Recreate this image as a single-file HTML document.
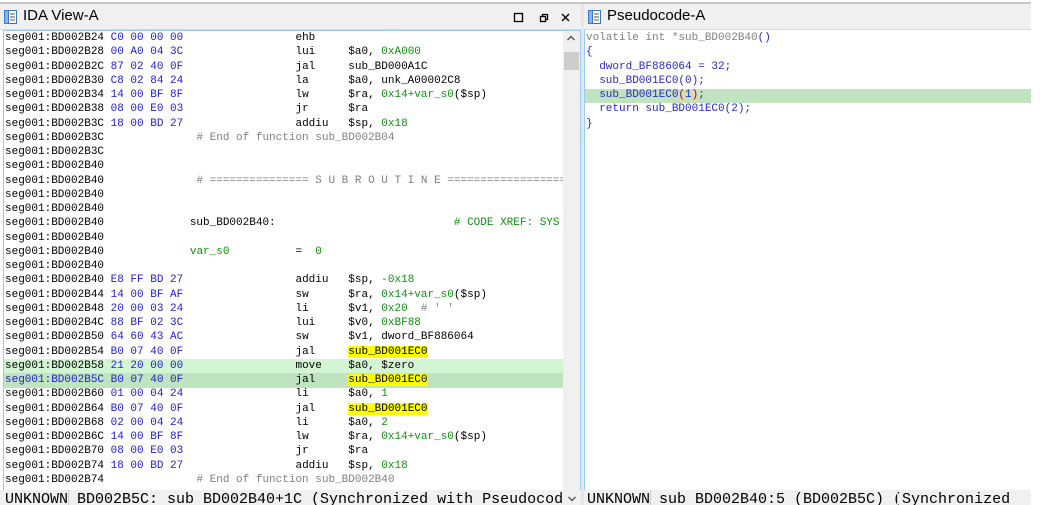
<!DOCTYPE html>
<html><head><style>
*{margin:0;padding:0;box-sizing:border-box}
body{width:1063px;height:505px;background:#fff;position:relative;overflow:hidden;font-family:"Liberation Mono",monospace}
.abs{position:absolute}
.title{font-family:"Liberation Sans",sans-serif;font-size:15px;color:#000}
.code{position:absolute;font-size:11px;line-height:14.26px;color:#000;overflow:hidden}
.row{height:14.26px;white-space:pre}
.h{color:#2020d0}
.g{color:#109010}
.c{color:#808080}
.y{background:#ffff00}
.p{color:#2828c8}
.status{font-size:15px;white-space:pre;color:#000;line-height:15px}
</style></head><body>
<div class="abs" style="left:0;top:2px;width:1031px;height:2px;background:#c8c8c8"></div>
<div class="abs" style="left:0;top:4px;width:581px;height:26px;background:#f0f0f0;border-bottom:1px solid #d8d8d8"></div>
<svg class="abs" style="left:3px;top:9px" width="16" height="16" viewBox="0 0 16 16"><rect x="1.5" y="1.5" width="12" height="13" fill="#fff" stroke="#3a78c8"/><rect x="1.5" y="1.5" width="4" height="13" fill="#8ab4e6" stroke="#3a78c8"/><path d="M7 5h5M7 8h5M7 11h5" stroke="#555"/></svg>
<div class="abs title" style="left:23px;top:7px">IDA View-A</div>
<svg class="abs" style="left:512px;top:11px" width="60" height="14" viewBox="0 0 60 14"><rect x="2.5" y="2.5" width="8" height="8" fill="none" stroke="#000" stroke-width="1.3"/><rect x="28.5" y="5.5" width="5" height="5" fill="none" stroke="#000" stroke-width="1.3"/><path d="M30.5 5.5V3.5h5v5h-2" fill="none" stroke="#000" stroke-width="1.3"/><path d="M50 3l7 7M57 3l-7 7" stroke="#000" stroke-width="1.4"/></svg>
<div class="abs" style="left:3px;top:30px;width:578px;height:460px;border:1px solid #9ccbf0;border-bottom:none"></div>
<div class="abs" style="left:563px;top:31px;width:17px;height:459px;background:#f0f0f0"></div>
<svg class="abs" style="left:566px;top:34px" width="10" height="8" viewBox="0 0 10 8"><path d="M1.5 6L5 2.5 8.5 6" fill="none" stroke="#555" stroke-width="1.4"/></svg>
<div class="abs" style="left:564px;top:52px;width:15px;height:18px;background:#cdcdcd"></div>
<div class="abs" style="left:4px;top:359px;width:559px;height:14.26px;background:#d4f5d4"></div>
<div class="abs" style="left:4px;top:373.3px;width:559px;height:14.26px;background:#c0e4c0"></div>
<div class="code" style="left:5px;top:31px;width:558px;height:459px"><div class="row">seg001:BD002B24 <span class="h">C0 00 00 00</span>                 ehb</div><div class="row">seg001:BD002B28 <span class="h">00 A0 04 3C</span>                 lui     $a0, <span class="g">0xA000</span></div><div class="row">seg001:BD002B2C <span class="h">87 02 40 0F</span>                 jal     sub_BD000A1C</div><div class="row">seg001:BD002B30 <span class="h">C8 02 84 24</span>                 la      $a0, unk_A00002C8</div><div class="row">seg001:BD002B34 <span class="h">14 00 BF 8F</span>                 lw      $ra, <span class="g">0x14+var_s0</span>($sp)</div><div class="row">seg001:BD002B38 <span class="h">08 00 E0 03</span>                 jr      $ra</div><div class="row">seg001:BD002B3C <span class="h">18 00 BD 27</span>                 addiu   $sp, <span class="g">0x18</span></div><div class="row">seg001:BD002B3C              <span class="c"># End of function sub_BD002B04</span></div><div class="row">seg001:BD002B3C</div><div class="row">seg001:BD002B40</div><div class="row">seg001:BD002B40              <span class="c"># =============== S U B R O U T I N E =======================================</span></div><div class="row">seg001:BD002B40</div><div class="row">seg001:BD002B40</div><div class="row">seg001:BD002B40             sub_BD002B40:                           <span class="g"># CODE XREF: SYS</span></div><div class="row">seg001:BD002B40</div><div class="row">seg001:BD002B40             <span class="g">var_s0</span>          =  <span class="g">0</span></div><div class="row">seg001:BD002B40</div><div class="row">seg001:BD002B40 <span class="h">E8 FF BD 27</span>                 addiu   $sp, <span class="g">-0x18</span></div><div class="row">seg001:BD002B44 <span class="h">14 00 BF AF</span>                 sw      $ra, <span class="g">0x14+var_s0</span>($sp)</div><div class="row">seg001:BD002B48 <span class="h">20 00 03 24</span>                 li      $v1, <span class="g">0x20</span>  <span class="c"># ' '</span></div><div class="row">seg001:BD002B4C <span class="h">88 BF 02 3C</span>                 lui     $v0, <span class="g">0xBF88</span></div><div class="row">seg001:BD002B50 <span class="h">64 60 43 AC</span>                 sw      $v1, dword_BF886064</div><div class="row">seg001:BD002B54 <span class="h">B0 07 40 0F</span>                 jal     <span class="y">sub_BD001EC0</span></div><div class="row">seg001:BD002B58 <span class="h">21 20 00 00</span>                 move    $a0, $zero</div><div class="row"><span class="h">seg001:BD002B5C</span> <span class="h">B0 07 40 0F</span>                 jal     <span class="y">sub_BD001EC0</span></div><div class="row">seg001:BD002B60 <span class="h">01 00 04 24</span>                 li      $a0, <span class="g">1</span></div><div class="row">seg001:BD002B64 <span class="h">B0 07 40 0F</span>                 jal     <span class="y">sub_BD001EC0</span></div><div class="row">seg001:BD002B68 <span class="h">02 00 04 24</span>                 li      $a0, <span class="g">2</span></div><div class="row">seg001:BD002B6C <span class="h">14 00 BF 8F</span>                 lw      $ra, <span class="g">0x14+var_s0</span>($sp)</div><div class="row">seg001:BD002B70 <span class="h">08 00 E0 03</span>                 jr      $ra</div><div class="row">seg001:BD002B74 <span class="h">18 00 BD 27</span>                 addiu   $sp, <span class="g">0x18</span></div><div class="row">seg001:BD002B74              <span class="c"># End of function sub_BD002B40</span></div></div>
<div class="abs" style="left:0;top:490px;width:581px;height:15px;background:#f0f0f0;overflow:hidden">
<div class="status abs" style="left:5px;top:2px">UNKNOWN BD002B5C: sub BD002B40+1C (Synchronized with Pseudocode</div>
<div class="abs" style="left:68px;top:0;width:1px;height:15px;background:#d0d0d0"></div>
<div class="abs" style="left:563px;top:0;width:18px;height:15px;background:#f0f0f0"></div>
<svg class="abs" style="left:567px;top:5px" width="10" height="8" viewBox="0 0 10 8"><path d="M1.5 2L5 5.5 8.5 2" fill="none" stroke="#555" stroke-width="1.4"/></svg>
</div>
<div class="abs" style="left:581px;top:4px;width:3px;height:501px;background:#e6e6e6"></div>
<div class="abs" style="left:584px;top:4px;width:447px;height:26px;background:#f0f0f0;border-bottom:1px solid #d8d8d8"></div>
<svg class="abs" style="left:587px;top:9px" width="16" height="16" viewBox="0 0 16 16"><rect x="1.5" y="1.5" width="12" height="13" fill="#fff" stroke="#3a78c8"/><rect x="1.5" y="1.5" width="4" height="13" fill="#8ab4e6" stroke="#3a78c8"/><path d="M7 5h5M7 8h5M7 11h5" stroke="#555"/></svg>
<div class="abs title" style="left:607px;top:7px">Pseudocode-A</div>
<div class="abs" style="left:584px;top:30px;width:1px;height:460px;background:#9ccbf0"></div>
<div class="abs" style="left:585px;top:88.5px;width:446px;height:14.26px;background:#c0e4c0"></div>
<div class="code" style="left:586px;top:31px;width:440px"><div class="row"><span class="c">volatile int *sub_BD002B40</span><span class="p">()</span></div><div class="row"><span class="p">{</span></div><div class="row">  <span class="p">dword_BF886064 = 32;</span></div><div class="row">  <span class="p">sub_BD001EC0(0);</span></div><div class="row">  <span class="p">sub_BD001EC0<span style="background:#e8d8a0">(</span>1<span style="background:#e8d8a0">)</span>;</span></div><div class="row">  <span class="p">return sub_BD001EC0(2);</span></div><div class="row"><span class="p">}</span></div></div>
<div class="abs" style="left:584px;top:490px;width:447px;height:15px;background:#f0f0f0;overflow:hidden">
<div class="status abs" style="left:3px;top:2px">UNKNOWN sub BD002B40:5 (BD002B5C) (Synchronized</div>
<div class="abs" style="left:66px;top:0;width:1px;height:15px;background:#d0d0d0"></div>
<div class="abs" style="left:313px;top:0;width:1px;height:15px;background:#d0d0d0"></div>
</div>
</body></html>
